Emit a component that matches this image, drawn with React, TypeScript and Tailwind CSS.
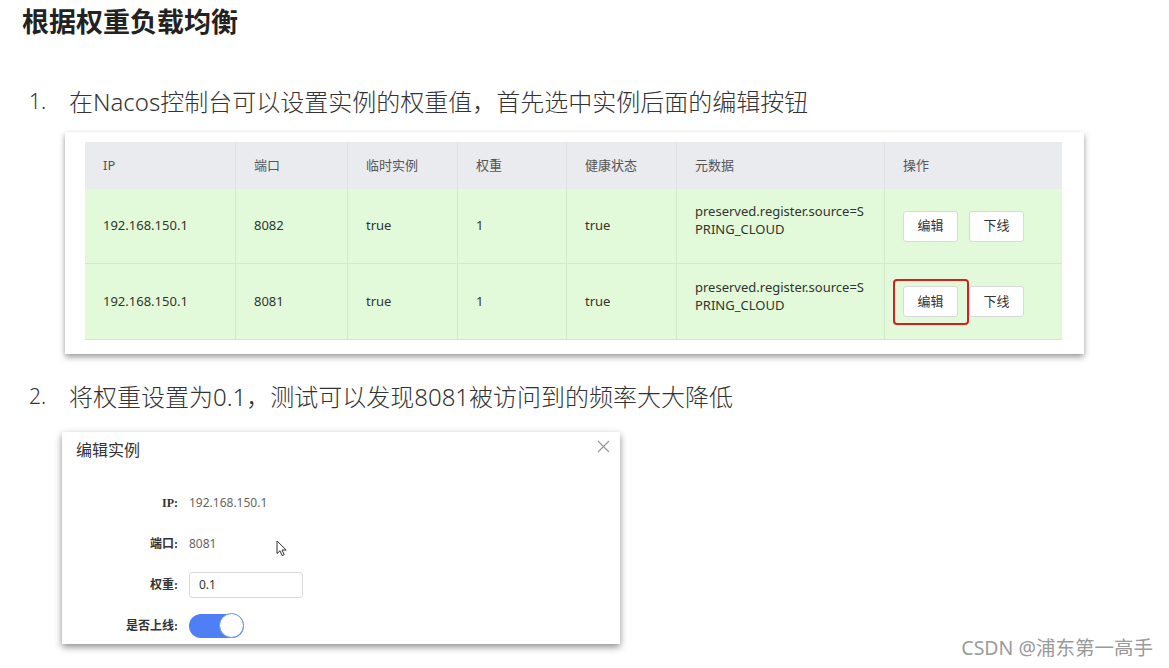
import React from 'react';

const FONT = '"Noto Sans", "Noto Sans CJK SC", sans-serif';

type Row = { ip: string; port: string };

const rows: Row[] = [
  { ip: '192.168.150.1', port: '8082' },
  { ip: '192.168.150.1', port: '8081' },
];

const columns = ['IP', '端口', '临时实例', '权重', '健康状态', '元数据', '操作'];
const colWidths = ['w-[151px]', 'w-[112px]', 'w-[110px]', 'w-[109px]', 'w-[110px]', 'w-[208px]', 'w-[177px]'];

const Btn: React.FC<{ label: string }> = ({ label }) => (
  <button className="h-[31px] w-[55px] rounded-[3px] border border-[#d9d9d9] bg-white text-[13px] text-[#333]">
    {label}
  </button>
);

const InstanceTable: React.FC = () => (
  <div className="ml-[65px] mt-[13px] h-[222px] w-[1019px] bg-white pl-[20px] pt-[10px] shadow-[0_3px_6px_rgba(0,0,0,0.4)]">
    <div className="w-[977px] text-[13px]">
      <div className="flex h-[47px] bg-[#e9ebef] text-[#555]">
        {columns.map((c, i) => (
          <div
            key={c}
            className={`${colWidths[i]} flex items-center pl-[18px] ${i < columns.length - 1 ? 'border-r border-[#dfe2e6]' : ''}`}
          >
            {c}
          </div>
        ))}
      </div>
      {rows.map((r, idx) => {
        const cells = [r.ip, r.port, 'true', '1', 'true'];
        return (
          <div
            key={r.port}
            className={`flex bg-[#e2fad9] text-[#333] ${idx === 0 ? 'h-[75px] border-b border-[#d2e8cb]' : 'h-[76px] border-b border-[#d2e8cb]'}`}
          >
            {cells.map((v, i) => (
              <div key={i} className={`${colWidths[i]} flex items-center border-r border-[#d2e8cb] pl-[18px]`}>
                {v}
              </div>
            ))}
            <div className={`${colWidths[5]} flex flex-col justify-center border-r border-[#d2e8cb] pb-[12px] pl-[18px] leading-[18px]`}>
              <span className="whitespace-nowrap">preserved.register.source=S</span>
              <span>PRING_CLOUD</span>
            </div>
            <div className={`${colWidths[6]} flex items-center gap-[11px] pl-[18px]`}>
              {idx === 1 ? (
                <div className="relative">
                  <Btn label="编辑" />
                  <div className="pointer-events-none absolute left-[-10px] top-[-7px] h-[46px] w-[76px] rounded-[4px] border-2 border-[#d81e1e]" />
                </div>
              ) : (
                <Btn label="编辑" />
              )}
              <Btn label="下线" />
            </div>
          </div>
        );
      })}
    </div>
  </div>
);

const FormRow: React.FC<{ label: string; children: React.ReactNode }> = ({ label, children }) => (
  <div className="flex h-[41px] items-center">
    <div
      className="w-[116px] text-right text-[12px] font-bold text-[#333]"
      style={{ fontFamily: '"Liberation Serif", "Noto Sans CJK SC", serif' }}
    >
      {label}
    </div>
    <div className="ml-[11px] text-[12px] text-[#666]">{children}</div>
  </div>
);

const EditDialog: React.FC = () => (
  <div className="relative ml-[62px] mt-[18px] h-[212px] w-[558px] bg-white shadow-[0_3px_7px_rgba(0,0,0,0.45)]">
    <div className="flex items-start justify-between">
      <div className="ml-[14px] mt-[6px] text-[16px] leading-[24px] text-[#333]">编辑实例</div>
      <svg className="mr-[10px] mt-[8px]" width="13" height="13" viewBox="0 0 13 13">
        <path d="M1 1L12 12M12 1L1 12" stroke="#999" strokeWidth="1.2" />
      </svg>
    </div>
    <div className="mt-[20px]">
      <FormRow label="IP:">192.168.150.1</FormRow>
      <FormRow label="端口:">8081</FormRow>
      <FormRow label="权重:">
        <div className="flex h-[26px] w-[114px] items-center rounded-[3px] border border-[#d9d9d9] pl-[9px] text-[#333]">
          0.1
        </div>
      </FormRow>
      <FormRow label="是否上线:">
        <div className="flex h-[24px] w-[55px] items-center justify-end rounded-full bg-[#4f7ff5]">
          <div className="h-[25px] w-[25px] rounded-full border border-[#6b8ff0] bg-white" />
        </div>
      </FormRow>
    </div>
    {/* mouse pointer */}
    <svg className="absolute left-[214px] top-[108px]" width="12" height="17" viewBox="0 0 12 17">
      <path d="M1 1L1 13.5L4 10.8L6.2 15.6L8.2 14.7L6 10L10.2 10Z" fill="white" stroke="#333" strokeWidth="1" strokeLinejoin="round" />
    </svg>
  </div>
);

const App: React.FC = () => {
  return (
    <div className="relative h-[668px] w-[1169px] overflow-hidden bg-white" style={{ fontFamily: FONT }}>
      <h1 className="ml-[22px] pt-[5px] text-[27px] font-bold leading-[34px] text-[#222]">根据权重负载均衡</h1>

      <div className="mt-[46px] flex h-[34px] items-center text-[24px] font-light text-[#333]">
        <span className="w-[69px] pl-[29px] text-[21px]">1.</span>
        <span>在Nacos控制台可以设置实例的权重值，首先选中实例后面的编辑按钮</span>
      </div>

      <InstanceTable />

      <div className="mt-[26px] flex h-[34px] items-center text-[24px] font-light text-[#333]">
        <span className="w-[69px] pl-[29px] text-[21px]">2.</span>
        <span>将权重设置为0.1，测试可以发现8081被访问到的频率大大降低</span>
      </div>

      <EditDialog />

      <div className="absolute bottom-[6px] right-[16px] text-[19.5px] text-[#9a9a9a]">CSDN @浦东第一高手</div>
    </div>
  );
};

export default App;
